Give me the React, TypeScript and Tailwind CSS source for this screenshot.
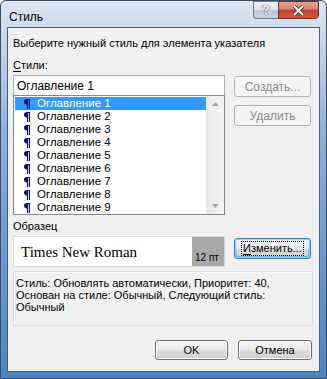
import React from "react";

const F = { fontFamily: '"Liberation Sans", Arial, sans-serif' };

function Btn({ children, disabled, focused, className = "" }: { children: React.ReactNode; disabled?: boolean; focused?: boolean; className?: string }) {
  if (disabled) {
    return (
      <div className={`flex items-center justify-center rounded-[3px] border border-[#adb2b5] bg-[#f4f4f4] text-[11px] text-[#8a8a8a] ${className}`}>
        {children}
      </div>
    );
  }
  if (focused) {
    return (
      <div className={`flex items-center justify-center rounded-[3px] border border-[#3c7fb1] bg-[linear-gradient(#e5f4fc_0%,#c4e5f6_50%,#98d1ef_51%,#68b3db_100%)] p-[2px] shadow-[inset_0_0_0_1px_#8fd5f5] ${className}`}>
        <div className="flex h-full w-full items-center justify-center rounded-[2px] bg-[linear-gradient(#f4f4f4_0%,#ececec_50%,#dddddd_51%,#d2d2d2_100%)] text-[11px] text-black">
          <span className="border border-dotted border-black px-[1px] leading-[13px]">{children}</span>
        </div>
      </div>
    );
  }
  return (
    <div className={`flex items-center justify-center rounded-[3px] border border-[#707070] bg-[linear-gradient(#f2f2f2_0%,#ebebeb_50%,#dddddd_51%,#cfcfcf_100%)] shadow-[inset_0_0_0_1px_#fcfcfc] text-[11px] text-black ${className}`}>
      {children}
    </div>
  );
}

function Pilcrow() {
  return (
    <svg width="6" height="10" viewBox="0 0 6 10" className="ml-[9px] mr-[7px] shrink-0">
      <path d="M2.8 0 H6 V10 H4.9 V1.1 H4.1 V10 H2.9 V5.4 C1.2 5.4 0 4.3 0 2.7 C0 1.1 1.2 0 2.8 0 Z" fill="#0a0a78" />
    </svg>
  );
}

export default function App() {
  const items = [1, 2, 3, 4, 5, 6, 7, 8, 9];
  return (
    <div style={F} className="relative flex h-[379px] w-[327px] flex-col overflow-hidden rounded-t-[6px] border border-[#3a4a5e] bg-[linear-gradient(180deg,#dce6f1_0%,#c9d8ea_10%,#8fb0d8_35%,#6a97cf_70%,#4f84c4_100%)]">
      {/* title bar */}
      <div className="flex h-[26px] shrink-0 items-start">
        <div className="pl-[8px] pt-[7px] text-[12px] text-black">Стиль</div>
        <div className="ml-auto mr-[7px] flex h-[18px]">
          <div className="flex w-[25px] items-center justify-center rounded-bl-[4px] border border-r-0 border-[#6d7a8a] bg-[linear-gradient(#f0f3f7_0%,#d9e1ea_50%,#bcc8d6_51%,#c9d3df_100%)] text-[13px] font-bold text-white [text-shadow:0_0_1px_#333,0_0_1px_#333]">?</div>
          <div className="flex w-[41px] items-center justify-center rounded-br-[4px] border border-[#6e2a22] bg-[linear-gradient(#e8a394_0%,#d98170_45%,#c0422c_50%,#d2563b_100%)] text-[13px] font-bold text-white [text-shadow:0_0_1px_#5a1a10]">
            <svg width="13" height="11" viewBox="0 0 13 11"><path d="M2 1 L11 10 M11 1 L2 10" stroke="#4a1a12" strokeWidth="3.6" /><path d="M2 1 L11 10 M11 1 L2 10" stroke="#fff" strokeWidth="2.2" /></svg>
          </div>
        </div>
      </div>
      {/* content */}
      <div className="mx-[6px] mb-[6px] flex flex-1 flex-col border border-[#4c5f7a] bg-[#f0f0f0] pl-[5px] pr-[7px] text-[11px] text-black">
        <div className="mt-[9px] h-[13px] leading-[13px]">Выберите нужный стиль для элемента указателя</div>
        <div className="mt-[9px] h-[13px] leading-[13px]"><span className="underline underline-offset-2">С</span>тили:</div>
        <div className="mt-[3px] flex gap-[9px]">
          <div className="flex w-[212px] flex-col">
            <div className="flex h-[20px] items-center border border-[#abadb3] border-b-0 bg-white pl-[3px] text-[12px]">Оглавление 1</div>
            <div className="flex h-[120px] border border-[#828790] bg-white">
              <div className="flex flex-1 flex-col pl-[1px] pt-[1px] text-[11.5px]">
                {items.map((n) => (
                  <div key={n} className={`flex h-[13px] items-center leading-[13px] ${n === 1 ? "bg-[#3399ff] text-white" : ""}`}>
                    <Pilcrow />
                    <span>Оглавление {n}</span>
                  </div>
                ))}
              </div>
              <div className="flex w-[18px] flex-col items-center justify-between border-l border-[#e8e8e8] bg-[linear-gradient(90deg,#eaeaea,#f4f4f4)] py-[6px]">
                <svg width="7" height="4" viewBox="0 0 7 4"><path d="M0 4 L3.5 0 L7 4Z" fill="#a0a0a0" /></svg>
                <svg width="7" height="4" viewBox="0 0 7 4"><path d="M0 0 L3.5 4 L7 0Z" fill="#a0a0a0" /></svg>
              </div>
            </div>
          </div>
          <div className="flex w-[77px] flex-col">
            <Btn disabled className="mt-[1px] h-[21px] text-[12px]">Создать...</Btn>
            <Btn disabled className="mt-[8px] h-[21px] text-[12px]">Удалить</Btn>
          </div>
        </div>
        <div className="mt-[5px] h-[13px] leading-[13px]">Образец</div>
        <div className="mt-[3px] flex gap-[9px]">
          <div className="flex h-[31px] w-[212px] border border-[#d8d8d8] bg-white">
            <div className="flex flex-1 items-center pl-[7px] pt-[1px] text-[15px] text-black" style={{ fontFamily: '"Liberation Serif", "Times New Roman", serif' }}>Times New Roman</div>
            <div className="flex w-[32px] items-end bg-[#a8a8a8] pb-[2px] pl-[3px] text-[10px] leading-[12px]">12 пт</div>
          </div>
          <Btn focused className="mt-[2px] h-[21px] w-[77px]"><span className="underline underline-offset-2">И</span>зменить...</Btn>
        </div>
        <div className="mt-[4px] h-[55px] w-[300px] border border-[#d5dfe5] bg-[#f0f0f0] pl-[2px] pt-[5px] leading-[12px] shadow-[inset_1px_1px_0_#fff]">
          Стиль: Обновлять автоматически, Приоритет: 40,<br />
          Основан на стиле: Обычный, Следующий стиль:<br />
          Обычный
        </div>
        <div className="mt-[14px] flex justify-end gap-[10px]">
          <Btn className="h-[20px] w-[73px]">OK</Btn>
          <Btn className="h-[20px] w-[74px]">Отмена</Btn>
        </div>
      </div>
    </div>
  );
}
